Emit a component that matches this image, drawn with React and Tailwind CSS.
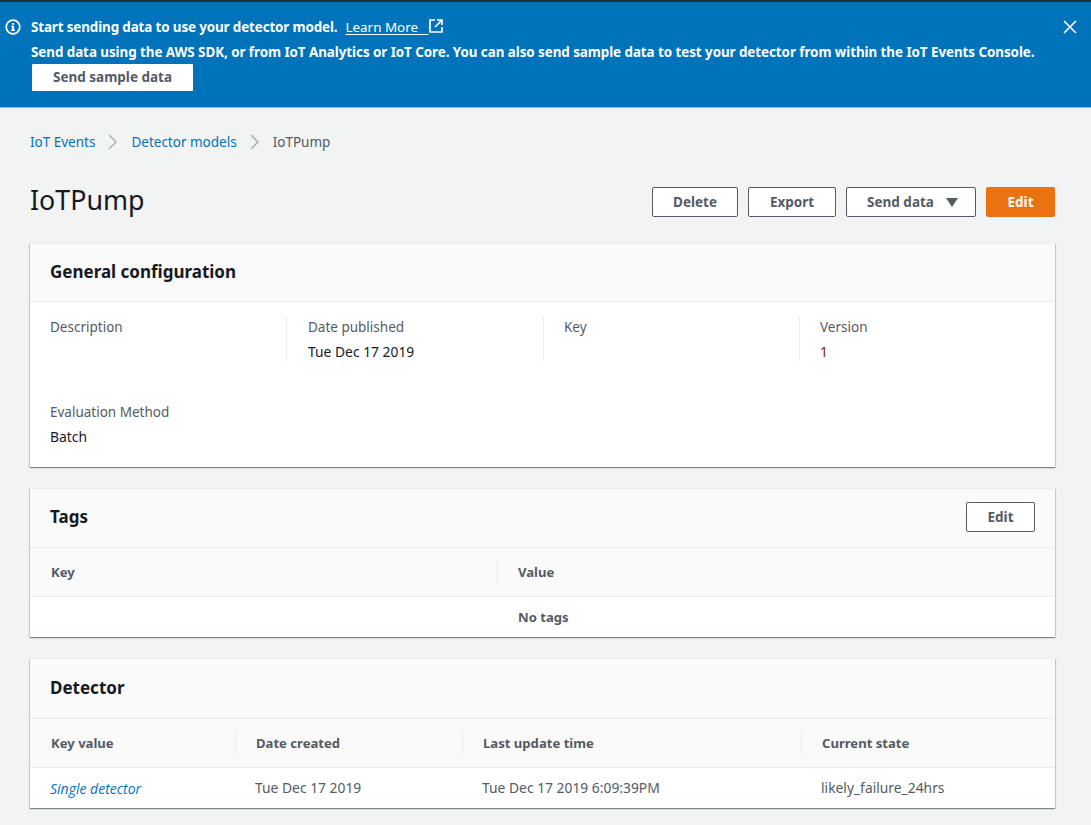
import React from "react";

const font = { fontFamily: '"Noto Sans", sans-serif' };

function Btn({ children, className = "" }) {
  return (
    <button className={`h-[30px] flex items-center justify-center rounded-[2px] border border-[#545b64] bg-white text-[13.5px] font-bold text-[#545b64] ${className}`}>
      {children}
    </button>
  );
}

function Card({ title, action, children, className = "", headerClass = "h-[58px]" }) {
  return (
    <section className={`bg-white shadow-[0_1px_1px_0_rgba(0,28,36,0.3),1px_1px_1px_0_rgba(0,28,36,0.15),-1px_1px_1px_0_rgba(0,28,36,0.15)] border-t border-[#eaeded] ${className}`}>
      <div className={`box-content bg-[#fafafa] border-b border-[#eaeded] px-5 flex items-center justify-between ${headerClass}`}>
        <h2 className="text-[17px] font-bold text-[#16191f] -mt-[2px]">{title}</h2>
        {action && <div className="-mt-[2px]">{action}</div>}
      </div>
      {children}
    </section>
  );
}

function Field({ label, value, valueClass = "text-[#16191f]", className = "" }) {
  return (
    <div className={`h-[45px] ${className}`}>
      <div className="text-[13.5px] leading-[20px] text-[#545b64]">{label}</div>
      {value && <div className={`text-[13.85px] leading-[20px] mt-[5px] ${valueClass}`}>{value}</div>}
    </div>
  );
}

function Th({ children, className = "" }) {
  return (
    <div className={`h-[24px] pt-[2px] flex items-center text-[13.1px] font-bold text-[#545b64] ${className}`}>{children}</div>
  );
}

function Chevron() {
  return (
    <svg width="12" height="16" viewBox="0 0 12 16" fill="none" stroke="#aab7b8" strokeWidth="1.6" className="mx-[12px]">
      <path d="M2 1l7 7-7 7" />
    </svg>
  );
}

export default function App() {
  return (
    <div style={font} className="min-h-[825px] bg-[#f2f3f3] border-t-2 border-[#232f3e]">
      <div className="h-[106px] bg-[#0073bb] border-b border-[#aab7b8] flex text-white pl-[5px] pr-[14px]">
        <svg width="16" height="16" viewBox="0 0 16 16" fill="none" className="mt-[17px] shrink-0">
          <circle cx="8" cy="8" r="6.8" stroke="#fff" strokeWidth="1.7" />
          <rect x="7" y="6.8" width="2.1" height="5" fill="#fff" />
          <rect x="6" y="10.6" width="4" height="1.3" fill="#fff" />
          <rect x="6" y="6.8" width="2" height="1.2" fill="#fff" />
          <rect x="7" y="4" width="2.1" height="1.8" fill="#fff" />
        </svg>
        <div className="ml-[10px] flex-1 min-w-0 pt-[12px]">
          <div className="h-[25px] flex items-center text-[13.4px] leading-[20px] font-bold">
            <span className="tracking-[-0.12px]">Start sending data to use your detector model.</span>
            <a className="ml-[8px] font-normal underline underline-offset-2 whitespace-pre">{"Learn More   "}</a>
            <svg width="14" height="14" viewBox="0 0 14 14" fill="none" stroke="#fff" strokeWidth="1.7" className="ml-[1px] -mt-[1px]">
              <path d="M6 1H1v12h12V8M8 1h5v5M13 1L6 8" />
            </svg>
          </div>
          <div className="h-[25px] flex items-center text-[13.4px] tracking-[-0.055px] leading-[20px] font-bold whitespace-nowrap">
            Send data using the AWS SDK, or from IoT Analytics or IoT Core. You can also send sample data to test your detector from within the IoT Events Console.
          </div>
          <button className="h-[29px] w-[163px] -mt-[2px] rounded-[2px] border border-[#545b64] bg-white text-[13.5px] font-bold text-[#545b64]">
            Send sample data
          </button>
        </div>
        <svg width="14" height="14" viewBox="0 0 14 14" fill="none" stroke="#fff" strokeWidth="1.6" className="mt-[18px] shrink-0">
          <path d="M1 1l12 12M13 1L1 13" />
        </svg>
      </div>

      <main className="pl-[30px] pr-[36px]">
        <nav className="h-[68px] flex items-center text-[13.5px]">
          <a className="text-[#0073bb]">IoT Events</a>
          <Chevron />
          <a className="text-[#0073bb]">Detector models</a>
          <Chevron />
          <span className="text-[#545b64]">IoTPump</span>
        </nav>

        <div className="mt-[11px] h-[30px] flex items-center justify-between">
          <h1 className="text-[26.8px] text-[#16191f] leading-none -mt-[3px]">IoTPump</h1>
          <div className="flex gap-[10px]">
            <Btn className="w-[86px]">Delete</Btn>
            <Btn className="w-[88px]">Export</Btn>
            <Btn className="w-[130px] pl-[3px]">
              Send data
              <svg width="12" height="9" viewBox="0 0 12 9" className="ml-[12px]"><path d="M0 0h12L6 9z" fill="#545b64" /></svg>
            </Btn>
            <button className="h-[30px] w-[69px] rounded-[2px] bg-[#ec7211] text-[13.5px] font-bold text-white">Edit</button>
          </div>
        </div>

        <Card title="General configuration" className="mt-[26px]" headerClass="h-[57px]">
          <div className="h-[165px] px-5 pt-[15px]">
            <div className="grid grid-cols-[236px_257px_256px_1fr]">
              <Field label="Description" />
              <Field label="Date published" value="Tue Dec 17 2019" className="border-l border-[#eaeded] pl-[21px]" />
              <Field label="Key" className="border-l border-[#eaeded] pl-[20px]" />
              <Field label="Version" value="1" valueClass="text-[#8b1a10]" className="border-l border-[#eaeded] pl-[20px]" />
            </div>
            <Field label="Evaluation Method" value="Batch" className="mt-[40px]" />
          </div>
        </Card>

        <Card
          title="Tags"
          className="mt-[21px]"
          action={<Btn className="w-[69px]">Edit</Btn>}
        >
          <div className="h-[49px] bg-[#fafafa] border-b border-[#eaeded] grid grid-cols-[467px_1fr] items-center">
            <Th className="pl-[21px]">Key</Th>
            <Th className="border-l border-[#eaeded] pl-[20px]">Value</Th>
          </div>
          <div className="h-[40px] grid grid-cols-[467px_1fr] items-center">
            <div />
            <div className="pl-[21px] pt-[2px] text-[13.1px] font-bold text-[#545b64]">No tags</div>
          </div>
        </Card>

        <Card title="Detector" className="mt-[21px]" headerClass="h-[59px]">
          <div className="h-[49px] bg-[#fafafa] border-b border-[#eaeded] grid grid-cols-[205px_227px_339px_1fr] items-center">
            <Th className="pl-[21px]">Key value</Th>
            <Th className="border-l border-[#eaeded] pl-[20px]">Date created</Th>
            <Th className="border-l border-[#eaeded] pl-[20px]">Last update time</Th>
            <Th className="border-l border-[#eaeded] pl-[20px]">Current state</Th>
          </div>
          <div className="h-[40px] grid grid-cols-[205px_227px_339px_1fr] items-center text-[13.85px] text-[#545b64]">
            <a className="pl-[20px] italic text-[14px] font-['Open_Sans'] text-[#0073bb]">Single detector</a>
            <div className="pl-[20px]">Tue Dec 17 2019</div>
            <div className="pl-[20px]">Tue Dec 17 2019 6:09:39PM</div>
            <div className="pl-[20px]">likely_failure_24hrs</div>
          </div>
        </Card>
      </main>
    </div>
  );
}
